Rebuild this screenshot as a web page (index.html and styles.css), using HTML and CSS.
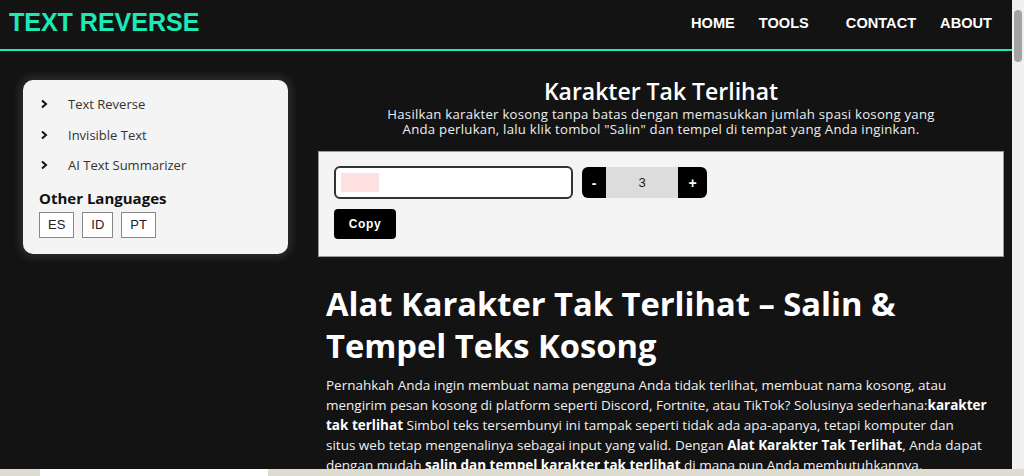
FILE: index.html
```html
<!DOCTYPE html>
<html lang="id">
<head>
  <meta charset="UTF-8">
  <meta name="viewport" content="width=device-width, initial-scale=1.0">
  <title>Karakter Tak Terlihat - Text Reverse</title>
  <link rel="stylesheet" href="styles.css">
</head>
<body>
  <div class="page">
    <header class="topbar">
      <a class="logo" href="#">TEXT REVERSE</a>
      <nav class="menu">
        <a href="#">HOME</a>
        <a href="#" class="tools">TOOLS</a>
        <a href="#">CONTACT</a>
        <a href="#">ABOUT</a>
      </nav>
    </header>

    <div class="layout">
      <aside class="sidebar">
        <ul class="tool-list">
          <li><svg class="chev" viewBox="0 0 8 10"><polyline points="2,1.5 6,5 2,8.5"/></svg>Text Reverse</li>
          <li><svg class="chev" viewBox="0 0 8 10"><polyline points="2,1.5 6,5 2,8.5"/></svg>Invisible Text</li>
          <li><svg class="chev" viewBox="0 0 8 10"><polyline points="2,1.5 6,5 2,8.5"/></svg>AI Text Summarizer</li>
        </ul>
        <h4>Other Languages</h4>
        <div class="langs">
          <a href="#">ES</a>
          <a href="#">ID</a>
          <a href="#">PT</a>
        </div>
      </aside>

      <main class="content">
        <h2 class="tool-title">Karakter Tak Terlihat</h2>
        <p class="tool-sub">Hasilkan karakter kosong tanpa batas dengan memasukkan jumlah spasi kosong yang<br>Anda perlukan, lalu klik tombol "Salin" dan tempel di tempat yang Anda inginkan.</p>

        <div class="tool-box">
          <div class="row">
            <!-- the highlighted block holds the generated blank characters -->
            <div class="output"><span class="blank"></span></div>
            <div class="counter">
              <button>-</button>
              <span class="count">3</span>
              <button>+</button>
            </div>
          </div>
          <button class="copy">Copy</button>
        </div>

        <h1>Alat Karakter Tak Terlihat – Salin &amp; Tempel Teks Kosong</h1>
        <p class="intro">Pernahkah Anda ingin membuat nama pengguna Anda tidak terlihat, membuat nama kosong, atau<br>
          mengirim pesan kosong di platform seperti Discord, Fortnite, atau TikTok? Solusinya sederhana:<b>karakter</b><br>
          <b>tak terlihat</b> Simbol teks tersembunyi ini tampak seperti tidak ada apa-apanya, tetapi komputer dan<br>
          situs web tetap mengenalinya sebagai input yang valid. Dengan <b>Alat Karakter Tak Terlihat</b>, Anda dapat<br>
          dengan mudah <b>salin dan tempel karakter tak terlihat</b> di mana pun Anda membutuhkannya.</p>
      </main>
    </div>
  </div>

  <!-- window chrome: scrollbar and taskbar edge -->
  <div class="scrollbar"><div class="thumb"></div></div>
  <div class="taskbar"><span class="search"></span></div>
</body>
</html>
```

FILE: styles.css
```css
:root {
  --bg: #131313;
  --teal: #1de9b6;
  --panel: #f4f4f4;
  --text: #f2f2f2;
}
html, body {
  height: 100%;
  overflow: hidden;
}
body {
  margin: 0;
  background: var(--bg);
  color: var(--text);
  font-family: "Open Sans", "Noto Sans", sans-serif;
}
.page {
  width: 1012px;
}
.topbar {
  height: 51px;
  box-sizing: border-box;
  border-bottom: 2px solid var(--teal);
  display: flex;
  align-items: center;
  justify-content: space-between;
  padding: 0 20px 4px 9px;
}
.logo {
  font-family: "Liberation Sans", Arial, sans-serif;
  font-weight: bold;
  font-size: 25px;
  color: var(--teal);
  text-decoration: none;
}
.menu {
  display: flex;
  gap: 24px;
}
.menu a {
  font-family: "Liberation Sans", Arial, sans-serif;
  font-weight: bold;
  font-size: 14.6px;
  color: #fff;
  text-decoration: none;
}
.menu .tools {
  margin-right: 13px;
}
.layout {
  display: grid;
  grid-template-columns: 265px 686px;
  gap: 30px;
  padding: 29px 0 0 23px;
}
.sidebar {
  background: var(--panel);
  border-radius: 10px;
  box-shadow: 0 0 10px 3px rgba(255, 255, 255, 0.12);
  padding: 9px 16px 16px;
  align-self: start;
  color: #222;
}
.tool-list {
  list-style: none;
  margin: 0;
  padding: 0;
}
.tool-list li {
  font-size: 13px;
  line-height: 30.5px;
  color: #333;
  display: flex;
  align-items: center;
}
.chev {
  width: 8px;
  height: 10px;
  margin: 0 20px 0 1px;
  fill: none;
  stroke: #111;
  stroke-width: 2;
}
.sidebar h4 {
  margin: 7px 0 4px;
  font-size: 15px;
  font-weight: 700;
  color: #111;
}
.langs {
  display: flex;
  gap: 8px;
}
.langs a {
  font-family: "Liberation Sans", Arial, sans-serif;
  font-size: 13px;
  color: #222;
  text-decoration: none;
  border: 1px solid #888;
  background: #fff;
  padding: 5px 8px;
  line-height: 14px;
}
.tool-title {
  text-align: center;
  font-size: 23px;
  font-weight: 600;
  margin: -5px 0 0;
  color: #fff;
}
.tool-sub {
  text-align: center;
  font-size: 13.2px;
  letter-spacing: 0.25px;
  line-height: 15px;
  margin: 0 0 14px;
  color: #eee;
}
.tool-box {
  background: var(--panel);
  border: 1px solid #999;
  padding: 14px 15px 17px;
}
.row {
  display: flex;
  gap: 9px;
  align-items: center;
}
.output {
  width: 239px;
  height: 33px;
  box-sizing: border-box;
  border: 2px solid #333;
  border-radius: 6px;
  background: #fff;
  padding: 5px;
}
.blank {
  display: block;
  width: 38px;
  height: 19px;
  background: #ffe0e0;
}
.counter {
  display: flex;
  height: 31px;
  border-radius: 6px;
  overflow: hidden;
}
.counter button {
  width: 24px;
  border: none;
  background: #000;
  color: #fff;
  font-family: "Liberation Sans", Arial, sans-serif;
  font-weight: bold;
  font-size: 14px;
  padding: 0;
}
.counter button:last-child {
  width: 29px;
}
.count {
  width: 72px;
  background: #dcdcdc;
  color: #222;
  font-family: "Liberation Sans", Arial, sans-serif;
  font-size: 13px;
  display: flex;
  align-items: center;
  justify-content: center;
}
.copy {
  margin-top: 10px;
  width: 62px;
  height: 30px;
  background: #000;
  color: #fff;
  border: none;
  border-radius: 4px;
  font-family: "Liberation Sans", Arial, sans-serif;
  font-weight: bold;
  font-size: 12px;
  letter-spacing: 0.6px;
}
h1 {
  font-size: 32.7px;
  line-height: 42px;
  font-weight: 700;
  margin: 26px 0 8px 8px;
  color: #fff;
}
.intro {
  font-size: 13.5px;
  line-height: 20px;
  margin: 0 0 0 8px;
  color: #f0f0f0;
  white-space: nowrap;
}
.intro b {
  color: #fff;
}
.scrollbar {
  position: fixed;
  top: 0;
  right: 0;
  width: 12px;
  height: 469px;
  background: #f0f0f0;
}
.thumb {
  margin: 10px 0 0 2px;
  width: 8px;
  height: 52px;
  border-radius: 4px;
  background: #a3a3a3;
}
.taskbar {
  position: fixed;
  left: 0;
  bottom: 0;
  width: 100%;
  height: 7px;
  background: #dedcd0;
}
.search {
  display: block;
  margin-left: 40px;
  width: 228px;
  height: 7px;
  background: #fff;
}
```
